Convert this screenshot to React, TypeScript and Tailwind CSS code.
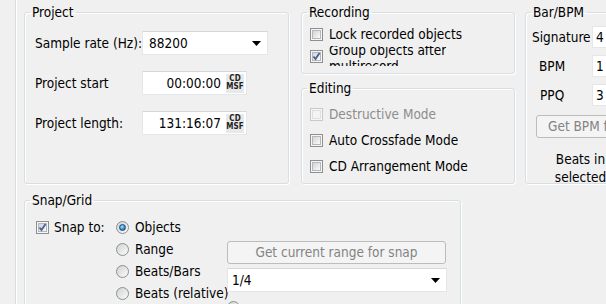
import type { ReactNode } from 'react';

const font = { fontFamily: '"DejaVu Sans Condensed", "DejaVu Sans", Tahoma, sans-serif' };

function Check({ checked = false, disabled = false }: { checked?: boolean; disabled?: boolean }) {
  return (
    <div
      className={`w-[13px] h-[13px] shrink-0 border p-[1px] bg-[#f6f6f6] ${disabled ? 'border-[#c8c8c8]' : 'border-[#8e8f8f]'}`}
    >
      <div
        className={`relative w-full h-full border ${
          disabled
            ? 'border-[#e0e0e0] bg-[#f4f4f4]'
            : 'border-[#b4b8bd] bg-gradient-to-br from-[#d2d4d6] to-[#fbfbfb]'
        }`}
      >
        {checked && (
          <svg className="absolute -left-[2px] -top-[2px]" width="11" height="11" viewBox="0 0 11 11">
            <path d="M2.5 5.5 L4.5 8 L8.5 2" fill="none" stroke="#4a5f97" strokeWidth="1.8" />
          </svg>
        )}
      </div>
    </div>
  );
}

function Radio({ selected = false }: { selected?: boolean }) {
  return (
    <div className="w-[13px] h-[13px] shrink-0 rounded-full border border-[#8e8f8f] bg-gradient-to-br from-[#d0d2d4] to-[#fbfbfb] flex items-center justify-center">
      {selected && (
        <div className="w-[7px] h-[7px] rounded-full border border-[#1a4a70] bg-[radial-gradient(circle_at_40%_35%,#a8e3ff,#2a8ad0_60%,#0f4f80)]" />
      )}
    </div>
  );
}

function Arrow() {
  return (
    <svg width="9" height="5" viewBox="0 0 9 5">
      <path d="M0 0 H9 L4.5 5 Z" fill="#000" />
    </svg>
  );
}

interface GroupProps {
  title: string;
  className: string;
  inner?: string;
  children?: ReactNode;
}

function Group({ title, className, inner = '', children }: GroupProps) {
  return (
    <fieldset className={`border border-[#d5dfe5] rounded-[3px] shadow-[inset_1px_1px_0_#fff,1px_1px_0_#fff] ${className}`}>
      <legend className="ml-[5px] px-[2px] leading-[16px] text-black">{title}</legend>
      <div className={inner}>{children}</div>
    </fieldset>
  );
}

function TimeField({ value }: { value: string }) {
  return (
    <div className="w-[105px] h-[24px] bg-white border border-[#e3e6ea] border-t-[#d4d7db] flex items-center justify-end pr-[2px]">
      <span className="mr-[5px]">{value}</span>
      <div className="w-[18px] h-[19px] bg-[#e8e8e8] flex flex-col items-center justify-center leading-[8px] text-[8px] font-bold text-[#222]">
        <span>CD</span>
        <span>MSF</span>
      </div>
    </div>
  );
}

function BpmInput({ value }: { value: string }) {
  return (
    <div className="w-[40px] h-[22px] bg-white border border-[#e3e6ea] flex items-center pl-[3px]">
      {value}
    </div>
  );
}

export default function App() {
  return (
    <div className="w-[606px] h-[304px] overflow-hidden bg-[#f0f0f0] flex text-[13.5px] text-black" style={font}>
      <div className="w-[15px] shrink-0" />
      <div className="w-[2px] shrink-0 border-l border-[#dcdcdc] bg-white" />
      <div className="flex-1 pl-[7px] pt-[4px] flex flex-col min-w-0">
        <div className="flex shrink-0">
          {/* Project */}
          <Group title="Project" className="w-[265px] h-[180px] shrink-0" inner="pl-[10px]">
            <div className="flex items-center h-[24px] mt-[11px]">
              <span className="w-[107px]">Sample rate (Hz):</span>
              <div className="w-[126px] h-[24px] bg-white border border-[#e3e6ea] border-t-[#d4d7db] flex items-center justify-between pl-[6px] pr-[6px]">
                <span>88200</span>
                <Arrow />
              </div>
            </div>
            <div className="flex items-center h-[24px] mt-[16px]">
              <span className="w-[107px]">Project start</span>
              <TimeField value="00:00:00" />
            </div>
            <div className="flex items-center h-[24px] mt-[16px]">
              <span className="w-[107px]">Project length:</span>
              <TimeField value="131:16:07" />
            </div>
          </Group>

          {/* Recording + Editing */}
          <div className="ml-[12px] w-[214px] shrink-0 flex flex-col">
            <Group title="Recording" className="h-[70px]" inner="pl-[8px]">
              <div className="flex items-center h-[16px] mt-[6px] gap-[6px]">
                <Check />
                <span>Lock recorded objects</span>
              </div>
              <div className="flex items-center h-[20px] mt-[4px] gap-[6px]">
                <Check checked />
                <div className="h-[20px] overflow-hidden">
                  <div className="leading-[16px] -mt-[4px]">
                    Group objects after
                    <br />
                    multirecord
                  </div>
                </div>
              </div>
            </Group>
            <Group title="Editing" className="h-[104px] mt-[6px]" inner="pl-[8px]">
              <div className="flex items-center h-[26px] mt-[5px] gap-[6px] text-[#8d8d8d]">
                <Check disabled />
                <span>Destructive Mode</span>
              </div>
              <div className="flex items-center h-[26px] gap-[6px]">
                <Check />
                <span>Auto Crossfade Mode</span>
              </div>
              <div className="flex items-center h-[26px] gap-[6px]">
                <Check />
                <span>CD Arrangement Mode</span>
              </div>
            </Group>
          </div>

          {/* Bar/BPM */}
          <Group title="Bar/BPM" className="ml-[10px] w-[109px] h-[180px] shrink-0" inner="pl-[6px]">
            <div className="flex items-center h-[22px] mt-[6px]">
              <span className="w-[60px]">Signature</span>
              <BpmInput value="4" />
            </div>
            <div className="flex items-center h-[22px] mt-[7px]">
              <span className="w-[60px] pl-[7px]">BPM</span>
              <BpmInput value="1" />
            </div>
            <div className="flex items-center h-[22px] mt-[7px]">
              <span className="w-[60px] pl-[8px]">PPQ</span>
              <BpmInput value="3" />
            </div>
            <div className="mt-[9px] ml-[4px] w-[90px] h-[23px] border border-[#bcbcbc] rounded-[3px] bg-[#f4f4f4] text-[#838383] flex items-center pl-[11px] whitespace-nowrap overflow-hidden">
              Get BPM from range
            </div>
            <div className="mt-[12px] text-center leading-[18px] pr-[4px]">
              Beats in
              <br />
              selected
            </div>
          </Group>
        </div>

        {/* Snap/Grid */}
        <Group title="Snap/Grid" className="mt-[8px] w-[437px] h-[140px] shrink-0" inner="pl-[11px]">
          <div className="flex mt-[8px]">
            <div className="w-[80px] h-[22px] flex items-center gap-[5px]">
              <Check checked />
              <span>Snap to:</span>
            </div>
            <div className="flex flex-col w-[111px]">
              {['Objects', 'Range', 'Beats/Bars', 'Beats (relative)', ''].map((label, i) => (
                <div key={i} className="h-[22px] flex items-center gap-[6px] whitespace-nowrap">
                  <Radio selected={i === 0} />
                  <span>{label}</span>
                </div>
              ))}
            </div>
            <div className="flex flex-col">
              <div className="mt-[25px] w-[219px] h-[23px] border border-[#bcbcbc] rounded-[3px] bg-[#f4f4f4] text-[#838383] flex items-center justify-center">
                Get current range for snap
              </div>
              <div className="mt-[4px] w-[220px] h-[24px] bg-white border border-[#e3e6ea] border-t-[#d4d7db] flex items-center justify-between pl-[4px] pr-[6px]">
                <span>1/4</span>
                <Arrow />
              </div>
              <div className="mt-[9px] flex items-center">
                <Radio />
              </div>
            </div>
          </div>
        </Group>
      </div>
    </div>
  );
}
